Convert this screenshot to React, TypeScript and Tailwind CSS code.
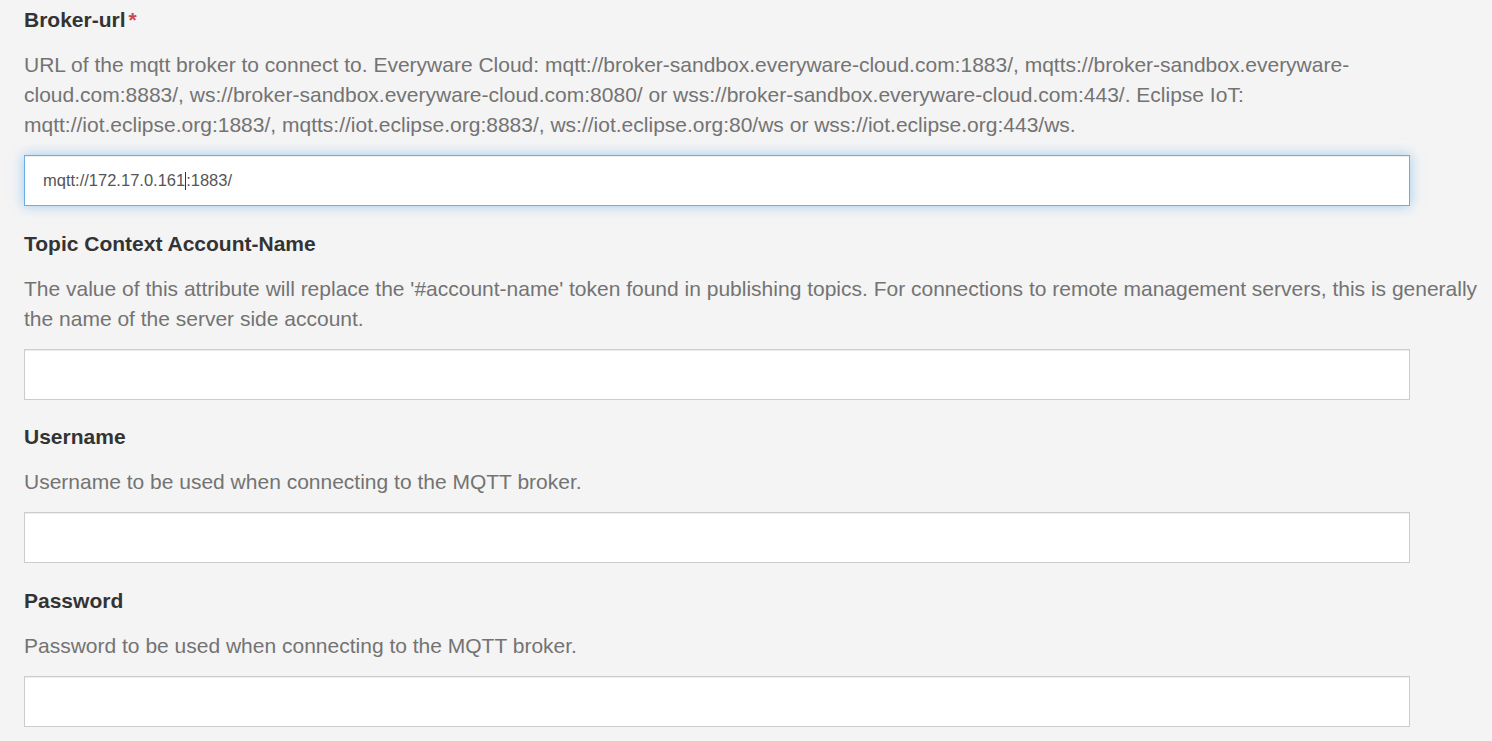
import React from "react";

const font = { fontFamily: '"Liberation Sans", Arial, Helvetica, sans-serif' };

function Field({
  label,
  required,
  desc,
  value,
  focused,
  caretAt,
}: {
  label: string;
  required?: boolean;
  desc: string;
  value?: string;
  focused?: boolean;
  caretAt?: number;
}) {
  const v = value ?? "";
  const before = caretAt !== undefined ? v.slice(0, caretAt) : v;
  const after = caretAt !== undefined ? v.slice(caretAt) : "";
  return (
    <div className="mb-[22.5px]">
      <div className="text-[21px] leading-[30px] font-bold text-[#333333] mb-[15px]">
        {label}
        {required && <span className="text-[#c9484a] text-[21px] font-bold ml-[3px]">*</span>}
      </div>
      <div className="text-[21px] leading-[30px] text-[#737373] mb-[15px]">{desc}</div>
      <div
        className={
          "w-[1386px] h-[51px] bg-white flex items-center px-[18px] text-[16.5px] text-[#555555] border-[1.5px] " +
          (focused
            ? "border-[#66afe9] shadow-[inset_0_1px_1px_rgba(0,0,0,0.075),0_0_12px_rgba(102,175,233,0.6)]"
            : "border-[#cccccc] shadow-[inset_0_1px_1px_rgba(0,0,0,0.075)]")
        }
      >
        <span className="whitespace-pre">{before}</span>
        {caretAt !== undefined && <span className="inline-block w-px h-[18px] bg-[#333]" />}
        <span className="whitespace-pre">{after}</span>
      </div>
    </div>
  );
}

export default function App() {
  return (
    <div className="min-h-screen bg-[#f4f4f4] pl-[24px] pr-[10px] pt-[5px]" style={font}>
      <Field
        label="Broker-url"
        required
        desc="URL of the mqtt broker to connect to. Everyware Cloud: mqtt://broker-sandbox.everyware-cloud.com:1883/, mqtts://broker-sandbox.everyware-cloud.com:8883/, ws://broker-sandbox.everyware-cloud.com:8080/ or wss://broker-sandbox.everyware-cloud.com:443/. Eclipse IoT: mqtt://iot.eclipse.org:1883/, mqtts://iot.eclipse.org:8883/, ws://iot.eclipse.org:80/ws or wss://iot.eclipse.org:443/ws."
        value="mqtt://172.17.0.161:1883/"
        focused
        caretAt={19}
      />
      <Field
        label="Topic Context Account-Name"
        desc="The value of this attribute will replace the '#account-name' token found in publishing topics. For connections to remote management servers, this is generally the name of the server side account."
      />
      <Field label="Username" desc="Username to be used when connecting to the MQTT broker." />
      <Field label="Password" desc="Password to be used when connecting to the MQTT broker." />
    </div>
  );
}
